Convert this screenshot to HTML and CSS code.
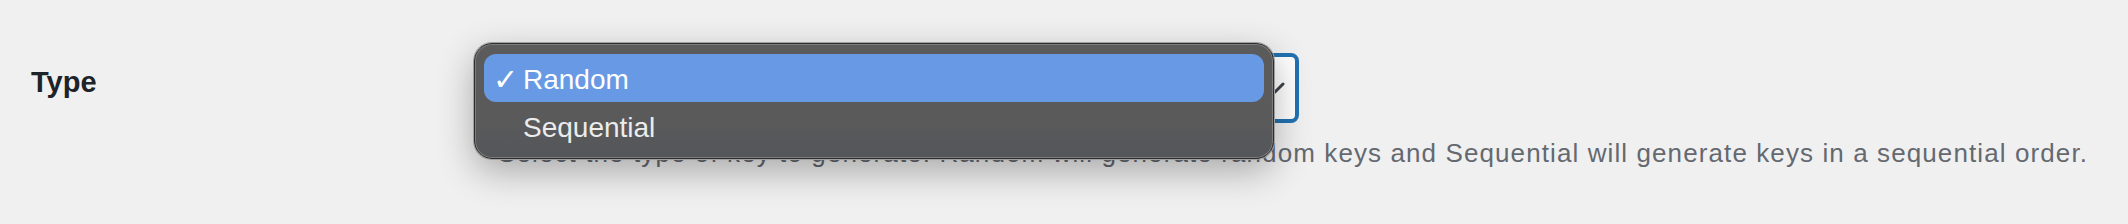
FILE: index.html
```html
<!DOCTYPE html>
<html lang="en">
<head>
    <meta charset="UTF-8">
    <title>Key Settings</title>
    <link rel="stylesheet" href="styles.css">
</head>
<body>
    <div class="form-table">
        <div class="form-row">
            <div class="form-label">
                <label for="key-type">Type</label>
            </div>
            <div class="form-field">
                <div class="select-wrap">
                    <div class="select" id="key-type">
                        <span class="select-value">Random</span>
                        <svg class="chevron" width="20" height="12" viewBox="0 0 20 12">
                            <path d="M2 2 L10 10 L18 2" fill="none" stroke="#3c434a" stroke-width="3" stroke-linecap="round" stroke-linejoin="round"/>
                        </svg>
                    </div>
                    <!-- open native menu -->
                    <ul class="menu">
                        <li class="menu-item selected"><span class="check">✓</span>Random</li>
                        <li class="menu-item"><span class="check"></span>Sequential</li>
                    </ul>
                </div>
                <p class="description">Select the type of key to generate. Random will generate random keys and Sequential will generate keys in a sequential order.</p>
            </div>
        </div>
    </div>
</body>
</html>
```

FILE: styles.css
```css
html, body {
    margin: 0;
    padding: 0;
    background: #f0f0f1;
}
body {
    font-family: "Liberation Sans", Arial, sans-serif;
    color: #1d2327;
    width: 2128px;
    height: 224px;
    overflow: hidden;
}
.form-row {
    display: flex;
    align-items: flex-start;
    padding-left: 31px;
}
.form-label {
    width: 467px;
    flex-shrink: 0;
    padding-top: 62px;
}
.form-label label {
    font-size: 29px;
    line-height: 40px;
    font-weight: bold;
    color: #1d2327;
}
.form-field {
    padding-top: 53px;
}
.select-wrap {
    position: relative;
    width: 801px;
}
.select {
    box-sizing: border-box;
    height: 70px;
    border: 4px solid #2271b1;
    border-radius: 8px;
    background: #fff;
    display: flex;
    align-items: center;
    justify-content: space-between;
    padding: 0 10px 0 20px;
    font-size: 28px;
    color: #2c3338;
}
.chevron {
    display: block;
}
.menu {
    position: absolute;
    left: -24px;
    top: -10px;
    width: 800px;
    height: 116px;
    box-sizing: border-box;
    margin: 0;
    padding: 10px 9px 0 9px;
    list-style: none;
    background: linear-gradient(#5b5b5b 0%, #5a5a5a 65%, #54565a 100%);
    border: 1px solid #2e2e2e;
    border-radius: 18px;
    box-shadow: inset 0 0 0 1px #7c7c7c, 0 0 0 1px #a0a0a0, 0 12px 36px rgba(0, 0, 0, 0.3);
}
.menu-item {
    height: 48px;
    box-sizing: border-box;
    padding: 4px 0 0 9px;
    line-height: 44px;
    font-size: 28px;
    color: #ececec;
    border-radius: 12px;
    display: flex;
}
.menu-item.selected {
    background: #6799e4;
    color: #fff;
}
.check {
    width: 30px;
    font-size: 30px;
    font-weight: bold;
    font-family: "DejaVu Sans", sans-serif;
}
.description {
    margin: 12px 0 0;
    font-size: 26px;
    line-height: 36px;
    letter-spacing: 1.1px;
    color: #646970;
    white-space: nowrap;
}
```
